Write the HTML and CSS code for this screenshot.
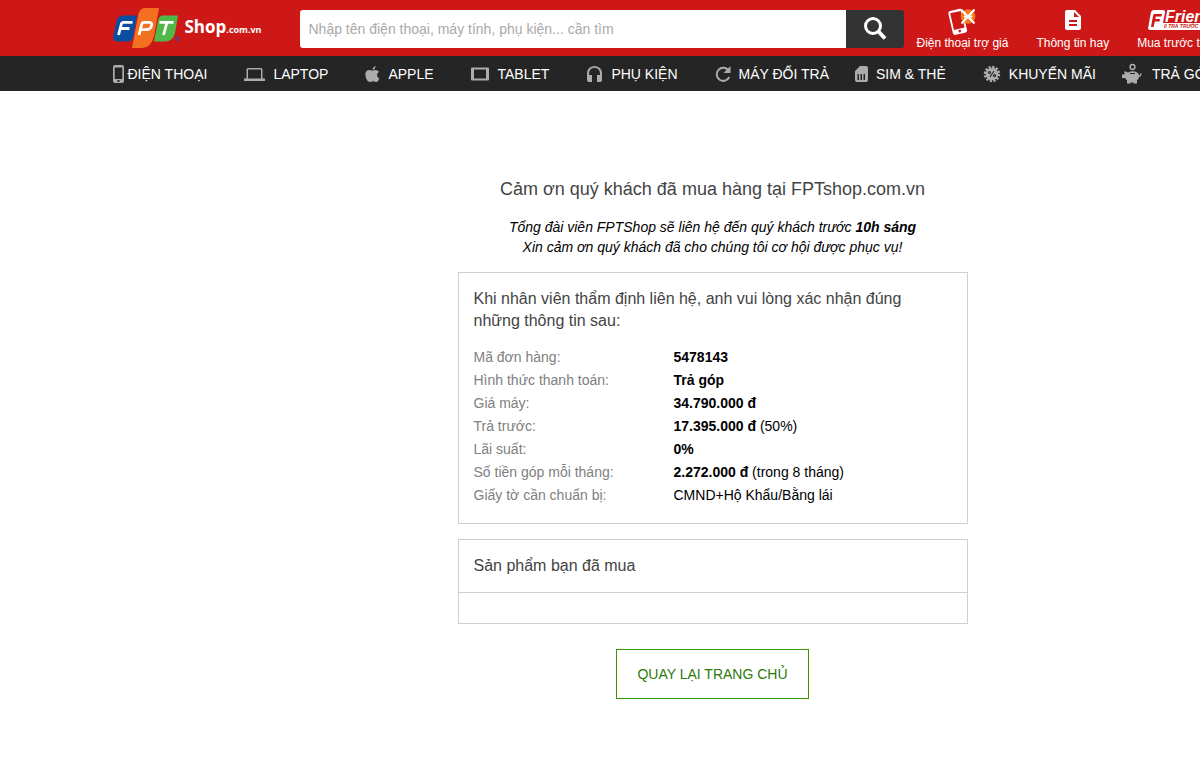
FILE: index.html
```
<!DOCTYPE html>
<html lang="vi">
<head>
<meta charset="utf-8">
<meta name="viewport" content="width=device-width, initial-scale=1">
<title>FPTShop.com.vn</title>
<link rel="stylesheet" href="styles.css">
</head>
<body>
<div class="page">
  <header class="topbar">
    <div class="wrap topbar-row">
      <a class="logo" href="#" aria-label="FPT Shop">
        <svg width="68" height="42" viewBox="0 0 68 42" aria-hidden="true">
          <path fill="#0a4ea2" d="M10 8.500Q5 9 3.500 14L.5 28Q-.8 34.500 5 34.500H16Q19 34 20 31L24 8.500Z"/>
          <path fill="#51b748" d="M49 8.500H65L62 26Q60 34 53 34.500H41L45 14Q46 9 49 8.500Z"/>
          <path fill="#f37021" d="M32 1H46L41 29Q38 41 29 41H19L25 9Q26.500 1 32 1Z"/>
          <g fill="none" stroke="#fff" stroke-width="2.800">
            <path d="M5.500 28 8.500 16.500Q9 15.400 10.500 15.400H19.500M7.500 21.500H16.500"/>
            <path d="M26 28 29 16.500Q29.500 15.400 31 15.400H36Q39.500 15.400 38.500 18.800T34 22.600H28.500"/>
            <path d="M46.500 15.400H60.500M54 15.400 50.500 28"/>
          </g>
          <circle cx="64.500" cy="32" r="2" fill="none" stroke="#5b3a80" stroke-width="1"/>
          <path fill="none" stroke="#5b3a80" stroke-width=".7" d="M64 33.200v-2.300h1.200v1h-1l1 1.300"/>
        </svg>
        <span class="logo-name">Shop<small>.com.vn</small></span>
      </a>
      <form class="search">
        <input class="search-input" type="text" aria-label="Tìm kiếm" placeholder="Nhập tên điện thoại, máy tính, phụ kiện... cần tìm">
        <button class="search-button" type="button" aria-label="Tìm">
          <svg width="24" height="24" viewBox="0 0 24 24" fill="none" stroke="#fff"><circle cx="10" cy="9" r="7.500" stroke-width="3"/><path d="m15.500 14.500 6.500 7" stroke-width="4"/></svg>
        </button>
      </form>
      <nav class="quick">
        <a href="#">
          <svg width="28" height="28" viewBox="0 0 28 28" aria-hidden="true">
            <g transform="rotate(-13 10 15)"><rect x="2.500" y="2.500" width="14.500" height="24.500" rx="2.500" fill="#fff"/><rect x="4.300" y="4.800" width="10.900" height="17" fill="#cd1817"/><circle cx="9.700" cy="24.300" r="1.300" fill="#cd1817"/></g>
            <circle cx="20" cy="9.500" r="7.300" fill="#f47a20"/>
            <path d="m13.500 3 13 13.500M26.500 2.500l-13 14" stroke="#fff" stroke-width="2"/>
            <path d="M17 5v9M23 5v9M15.500 9.500h9" stroke="#fff" stroke-width="1"/>
          </svg>
          <span>Điện thoại trợ giá</span>
        </a>
        <a href="#">
          <svg width="24" height="28" viewBox="0 0 24 28" aria-hidden="true"><path fill="#fff" fill-rule="evenodd" d="M6 3h8l6 6v12q0 2-2 2H6q-2 0-2-2V5q0-2 2-2zm7 2v5h5zM8 13v2h8v-2zm0 4v2h8v-2z"/></svg>
          <span>Thông tin hay</span>
        </a>
        <a href="#">
          <svg width="74" height="28" viewBox="0 0 74 28" aria-hidden="true">
            <path fill="#fff" d="M6 3H15Q17.500 3 17 5.500L15 16H74L73 23H2Q-.3 23 .2 20.500L2.800 6Q3.300 3 6 3Z"/>
            <path fill="#cd1817" d="M6.500 7H14L13.500 9.500H7.800L7.300 12H12L11.500 14.500H6.800L5.500 20H3L5 9Q5.300 7 6.500 7Z"/>
            <text class="friends-name" x="17" y="15">Friends</text>
            <text class="friends-note" x="16" y="21">0 TRẢ TRƯỚC • 0 LÃI SUẤT</text>
          </svg>
          <span>Mua trước trả sau</span>
        </a>
      </nav>
    </div>
  </header>

  <nav class="menu">
    <div class="wrap menu-row">
      <a class="snug" href="#"><svg width="11" height="18" viewBox="0 0 11 18" aria-hidden="true"><path fill-rule="evenodd" d="M2 0h7q2 0 2 2v14q0 2-2 2H2q-2 0-2-2V2Q0 0 2 0zm-.3 2.500v11.500h7.600V2.500zM4.500 15v2h2v-2z"/></svg>ĐIỆN THOẠI</a>
      <a href="#"><svg width="21" height="18" viewBox="0 0 21 18" aria-hidden="true"><path fill-rule="evenodd" d="M4 3h13q1.500 0 1.500 1.500v9H21v2.500H0v-2.500h2.500v-9Q2.500 3 4 3zm0 1.500v9h13v-9z"/></svg>LAPTOP</a>
      <a href="#"><svg width="15" height="18" viewBox="0 0 15 18" aria-hidden="true"><path d="M10.500 1q0 3-3 4Q7.500 2 10.500 1zM7.700 5.800Q9 5 10.500 5q2 0 3.500 1.800-2 1.200-2 3.200 0 2.200 2.300 3.400-1.300 3.600-3.300 3.600-2-.8-3-.8t-3 .8Q2.500 17 1 13q-2-6.500 2-7.700 1.800-.6 4.700.5z"/></svg>APPLE</a>
      <a href="#"><svg width="19" height="18" viewBox="0 0 19 18" aria-hidden="true"><path fill-rule="evenodd" d="M1 2.500h16q1 0 1 1v11q0 1-1 1H1q-1 0-1-1v-11q0-1 1-1zM3 4.500v9h12v-9z"/></svg>TABLET</a>
      <a href="#"><svg width="17" height="18" viewBox="0 0 17 18" aria-hidden="true"><path d="M8.500 1q7.500.5 7.500 8v6q0 2-2 2h-3v-7h3V9q0-6-5.500-6.300Q3 3 3 9v1h3v7H3q-2 0-2-2V9q0-7.500 7.500-8z"/></svg>PHỤ KIỆN</a>
      <a href="#"><svg width="16" height="18" viewBox="0 0 16 18" aria-hidden="true"><path fill="none" stroke="#acacac" stroke-width="2" d="M13.500 5.500A6.500 6.500 0 1 0 14.200 12"/><path d="M15.500 1v7h-7z"/></svg>MÁY ĐỔI TRẢ</a>
      <a class="near" href="#"><svg width="13" height="18" viewBox="0 0 13 18" aria-hidden="true"><path fill-rule="evenodd" d="M5 1h6q2 0 2 2v12q0 2-2 2H2q-2 0-2-2V6zM2.500 9v6h1.500V9zm3 0v6H7V9zm3 0v6H10V9z"/></svg>SIM &amp; THẺ</a>
      <a href="#"><svg width="18" height="18" viewBox="0 0 18 18" aria-hidden="true"><circle cx="9" cy="9" r="6.300"/><circle cx="9" cy="9" r="7" fill="none" stroke="#acacac" stroke-width="2.500" stroke-dasharray="2.200 1.464"/><g fill="none" stroke="#252525" stroke-width="1.100"><path d="m7 12 4-6"/><circle cx="6.500" cy="7.500" r="1"/><circle cx="11.500" cy="10.500" r="1"/></g></svg>KHUYẾN MÃI</a>
      <a class="near" href="#"><svg width="22" height="22" viewBox="0 0 22 22" aria-hidden="true"><circle cx="10.500" cy="4" r="2.400" fill="none" stroke="#acacac" stroke-width="1.500"/><path fill-rule="evenodd" d="M2.500 8 6 9.500Q11 7 15.500 9.700q1.500 1.300 1.700 2.800 1.300-.3 1-2.200l1.400.2q0 3-2.400 3.200-.3 2.200-2.200 3.600V20.500h-3.500v-1H8.500v1H5v-3.200q-1.200-.9-1.800-2.300H0V11.500h2.500zM8 10v1h5v-1z"/></svg>TRẢ GÓP</a>
    </div>
  </nav>

  <main class="thanks">
    <h1>Cảm ơn quý khách đã mua hàng tại FPTshop.com.vn</h1>
    <p class="note">Tổng đài viên FPTShop sẽ liên hệ đến quý khách trước <strong>10h sáng</strong><br>Xin cảm ơn quý khách đã cho chúng tôi cơ hội được phục vụ!</p>
    <section class="card">
      <h2>Khi nhân viên thẩm định liên hệ, anh vui lòng xác nhận đúng những thông tin sau:</h2>
      <dl class="details">
        <dt>Mã đơn hàng:</dt><dd><b>5478143</b></dd>
        <dt>Hình thức thanh toán:</dt><dd><b>Trả góp</b></dd>
        <dt>Giá máy:</dt><dd><b>34.790.000 đ</b></dd>
        <dt>Trả trước:</dt><dd><b>17.395.000 đ</b> (50%)</dd>
        <dt>Lãi suất:</dt><dd><b>0%</b></dd>
        <dt>Số tiền góp mỗi tháng:</dt><dd><b>2.272.000 đ</b> (trong 8 tháng)</dd>
        <dt>Giấy tờ cần chuẩn bị:</dt><dd>CMND+Hộ Khẩu/Bằng lái</dd>
      </dl>
    </section>
    <section class="card">
      <h2>Sản phẩm bạn đã mua</h2>
      <div class="products"></div>
    </section>
    <a class="home-link" href="#">QUAY LẠI TRANG CHỦ</a>
  </main>
</div>
</body>
</html>
```
FILE: styles.css
```
* { box-sizing: border-box; }

html { overflow-x: hidden; }

body {
  margin: 0;
  overflow-x: hidden;
  background: #fff;
  color: #000;
  font: 14px/20px "Liberation Sans", Arial, sans-serif;
}

h1, h2, p, dl, dd { margin: 0; font-weight: normal; }
a { color: inherit; text-decoration: none; }
svg { display: block; flex: none; }

/* Desktop layout: the page never gets narrower than its 1200px column plus margins */
.page { min-width: 1425px; }
.wrap { width: 1200px; margin: 0 auto; }

/* Top bar */
.topbar { background: #cd1817; color: #fff; }
.topbar-row { display: flex; align-items: flex-start; height: 56px; }

.logo { display: flex; align-items: center; width: 187px; padding-top: 7px; gap: 4px; }
.logo-name { font: bold 17px/24px "Open Sans", "Noto Sans", sans-serif; }
.logo-name small { font-size: 9px; }

.search { display: flex; width: 604px; height: 38px; margin: 10px 13px 0 0; border-radius: 3px; overflow: hidden; }
.search-input { flex: 1; min-width: 0; padding: 0 9px; border: 0; background: #fff; font: inherit; }
.search-input::placeholder { color: #a9a9a9; opacity: 1; }
.search-button { display: flex; align-items: center; justify-content: center; width: 58px; padding: 0; border: 0; background: #333; }

.quick { display: flex; gap: 28px; padding-top: 7px; font-size: 12px; line-height: 16px; white-space: nowrap; }
.quick a { display: flex; flex-direction: column; align-items: center; }
.friends-name { fill: #fff; font: italic bold 16px "Liberation Sans", sans-serif; }
.friends-note { fill: #cd1817; font: italic bold 5px "Liberation Sans", sans-serif; }

/* Category menu */
.menu { background: #252525; color: #fff; }
.menu-row { display: flex; gap: 37px; height: 35px; }
.menu a { display: flex; align-items: center; gap: 8px; white-space: nowrap; }
.menu a.snug { gap: 4px; }
.menu a.near { margin-left: -11px; }
.menu svg { fill: #acacac; }

/* Confirmation */
.thanks { display: flex; flex-direction: column; width: 510px; margin: 0 auto; padding: 87px 0 76px; }
.thanks h1 { margin-bottom: 17px; color: #444; font-size: 18px; line-height: 22px; text-align: center; }
.note { margin-bottom: 15px; font-style: italic; text-align: center; }

.card { margin-bottom: 15px; border: 1px solid #d0d0d0; }
.card h2 { padding: 15px 40px 15px 15px; color: #444; font-size: 16px; line-height: 22px; }
.details { display: grid; grid-template-columns: 200px 1fr; margin-top: -1px; padding: 0 15px 16px; line-height: 23px; }
.details dt { color: #808080; }
.products { height: 31px; border-top: 1px solid #d0d0d0; }

.home-link { align-self: center; margin-top: 10px; padding: 14px 20px; border: 1px solid #339900; color: #2b7a0b; }
```
